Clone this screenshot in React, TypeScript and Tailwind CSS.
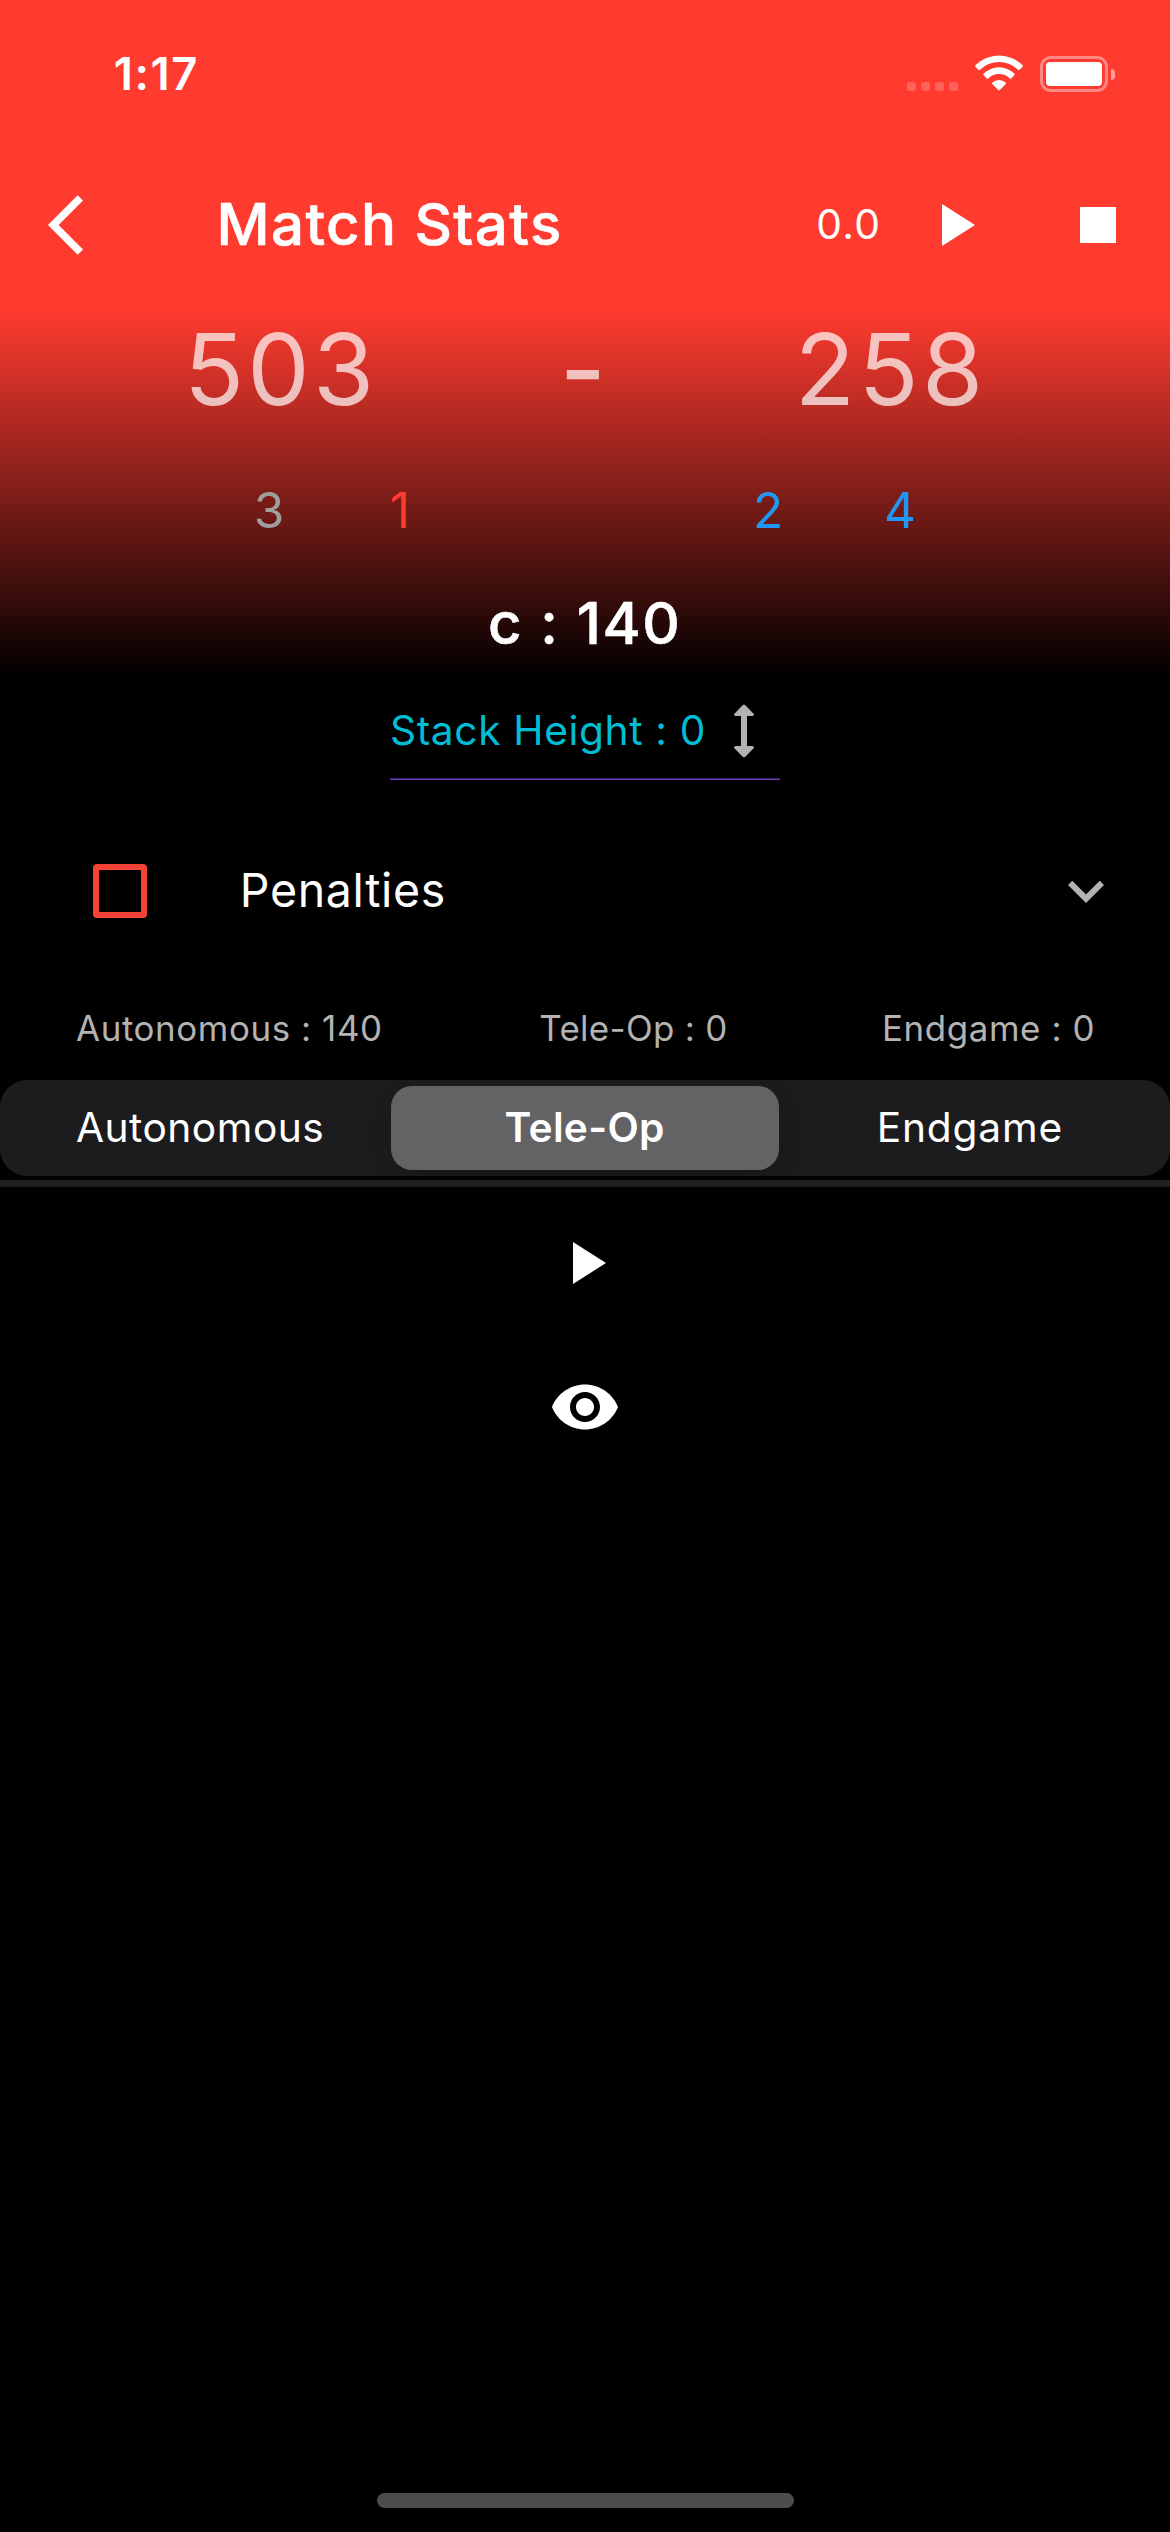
import React from "react";

function Icon({ d, className }: { d: string; className: string }) {
  return (
    <svg viewBox="0 0 24 24" fill="currentColor" className={`size-[72px] shrink-0 ${className}`}>
      <path d={d} />
    </svg>
  );
}

const BACK = "M11.67 3.87 9.9 2.1 0 12l9.9 9.9 1.77-1.77L3.54 12z";
const PLAY = "M8 5v14l11-7z";
const STOP = "M6 6h12v12H6z";
const HEIGHT =
  "M13 6.99h1.79c.45 0 .67-.54.35-.85l-2.79-2.78c-.2-.19-.51-.19-.71 0L8.86 6.14c-.32.31-.1.85.35.85H11v10.02H9.21c-.45 0-.67.54-.35.85l2.79 2.78c.2.19.51.19.71 0l2.79-2.78c.32-.31.09-.85-.35-.85H13V6.99z";
const CHEVRON_DOWN = "M16.59 8.59 12 13.17 7.41 8.59 6 10l6 6 6-6z";
const EYE =
  "M12 4.5C7 4.5 2.73 7.61 1 12c1.73 4.39 6 7.5 11 7.5s9.27-3.11 11-7.5c-1.73-4.39-6-7.5-11-7.5zM12 17c-2.76 0-5-2.24-5-5s2.24-5 5-5 5 2.24 5 5-2.24 5-5 5zm0-8c-1.66 0-3 1.34-3 3s1.34 3 3 3 3-1.34 3-3-1.34-3-3-3z";

function StatusBar() {
  return (
    <div className="flex h-[141px] items-center pt-[8px] pl-[113.7px] text-white">
      <span className="w-[793.3px] text-[45.4px] font-semibold tracking-[1.58px]">1:17</span>
      <div className="mt-[24px] flex gap-[5px]">
        {[0, 1, 2, 3].map((i) => (
          <span key={i} className="size-[9px] rounded-[3px] bg-white/20" />
        ))}
      </div>
      <svg viewBox="0 0 48 36" fill="currentColor" className="mt-[-3px] ml-[17px] h-[36px] w-[48px]">
        <path d="M0.6 10.1a33.2 33.2 0 0 1 46.8 0q.9.9 0 1.8l-2.9 2.9q-.7.7-1.4 0a27.2 27.2 0 0 0-38.2 0q-.7.7-1.4 0L.6 11.9q-.9-.9 0-1.8z" />
        <path d="M8.7 18.6a21.8 21.8 0 0 1 30.6 0q.8.8 0 1.6l-3.1 3.2q-.7.7-1.4 0a15.6 15.6 0 0 0-21.6 0q-.7.7-1.4 0l-3.1-3.2q-.8-.8 0-1.6z" />
        <path d="M17.3 27.4a10.2 10.2 0 0 1 13.4 0q.8.8 0 1.6L24.8 35.1q-.8.8-1.6 0L17.3 29q-.8-.8 0-1.6z" />
      </svg>
      <div className="mt-[-1px] ml-[17px] flex h-[36px] w-[68px] rounded-[11px] border-3 border-white/40 p-[3px]">
        <div className="flex-1 rounded-[4px] bg-white" />
      </div>
      <div className="mt-[-1px] ml-[3px] h-[11px] w-[4px] rounded-r-full bg-white/50" />
    </div>
  );
}

function AppBar() {
  return (
    <div className="flex h-[168px] items-center text-white">
      <Icon d={BACK} className="ml-[48px]" />
      <h1 className="ml-[96.5px] w-[599.8px] text-[58.2px] font-medium tracking-[1.4px] [-webkit-text-stroke:0.6px_white]">
        Match Stats
      </h1>
      <span className="w-[101.7px] text-[40.7px] tracking-[1.34px]">0.0</span>
      <Icon d={PLAY} className="" />
      <Icon d={STOP} className="ml-[72px]" />
    </div>
  );
}

function Scores() {
  return (
    <>
      <div className="flex h-[120px] items-center pl-[184px] text-[98.9px] leading-none text-white/70">
        <span className="w-[376px] tracking-[3.25px]">503</span>
        <span className="w-[234.7px] font-medium">-</span>
        <span className="tracking-[3.44px]">258</span>
      </div>
      <div className="flex h-[162px] items-center pl-[253.7px] text-[49.5px]">
        <span className="w-[136.3px] text-[#9e9e9e]">3</span>
        <span className="w-[363px] text-[#ff3b30]">1</span>
        <span className="w-[131px] text-[#2196f3]">2</span>
        <span className="text-[#2196f3]">4</span>
      </div>
    </>
  );
}

function StackHeight() {
  return (
    <div className="mx-auto mt-[28px] flex h-[96px] w-[390px] items-center border-b border-[#673ab7]">
      <div className="flex h-full w-full items-center border-b border-[#3c226b]">
        <span className="w-[318px] shrink-0 text-[40.7px] tracking-[0.63px] text-[#00bcd4]">Stack Height : 0</span>
        <Icon d={HEIGHT} className="text-[#b3b3b3]" />
      </div>
    </div>
  );
}

function Penalties() {
  return (
    <div className="flex h-[222px] items-center">
      <div className="ml-[93px] size-[54px] rounded-[4px] border-6 border-[#f44336]" />
      <span className="ml-[92.8px] flex-1 text-[46.5px] tracking-[0.67px] text-white">Penalties</span>
      <Icon d={CHEVRON_DOWN} className="mr-[48px] text-[#b3b3b3]" />
    </div>
  );
}

function Totals() {
  return (
    <div className="flex h-[53px] items-center pl-[76px] text-[34.9px] whitespace-nowrap text-[#b3b3b3]">
      <span className="w-[463.3px] tracking-[0.59px]">Autonomous : 140</span>
      <span className="w-[342.7px] tracking-[0.33px]">Tele-Op : 0</span>
      <span className="tracking-[0.6px]">Endgame : 0</span>
    </div>
  );
}

function Tabs() {
  return (
    <div className="mt-[25px] flex h-[96px] items-center rounded-[27px] bg-[#1c1c1e] py-[6px] text-[40.7px] text-white">
      <div className="w-[391px] pl-[75.9px] tracking-[0.5px]">Autonomous</div>
      <div className="flex h-full w-[388px] items-center rounded-[21px] bg-[#636366] pl-[113.6px] font-semibold tracking-[0.29px] shadow-[0_9px_24px_rgba(0,0,0,0.12)]">
        Tele-Op
      </div>
      <div className="pl-[97.8px] tracking-[0.79px]">Endgame</div>
    </div>
  );
}

export default function App() {
  return (
    <div className="flex h-[2532px] w-[1170px] flex-col overflow-hidden bg-black font-['Inter',sans-serif]">
      <header className="bg-[#ff3b30]">
        <StatusBar />
        <AppBar />
      </header>
      <main className="flex flex-1 flex-col bg-[linear-gradient(to_bottom,#ff3b30_0px,#000_367px)]">
        <Scores />
        <div className="flex h-[65px] items-center pl-[488px] text-[58.2px] leading-none font-medium tracking-[1.62px] text-white [-webkit-text-stroke:0.6px_white]">
          c : 140
        </div>
        <StackHeight />
        <Penalties />
        <Totals />
        <Tabs />
        <div className="mt-[4px] h-[7px] bg-[#1f1f1f]" />
        <div className="mt-[40px] flex flex-col items-center gap-[72px] text-white">
          <Icon d={PLAY} className="" />
          <Icon d={EYE} className="" />
        </div>
      </main>
      <div className="mx-auto mb-[24px] h-[15px] w-[417px] rounded-full bg-[#4d4d4d]" />
    </div>
  );
}
